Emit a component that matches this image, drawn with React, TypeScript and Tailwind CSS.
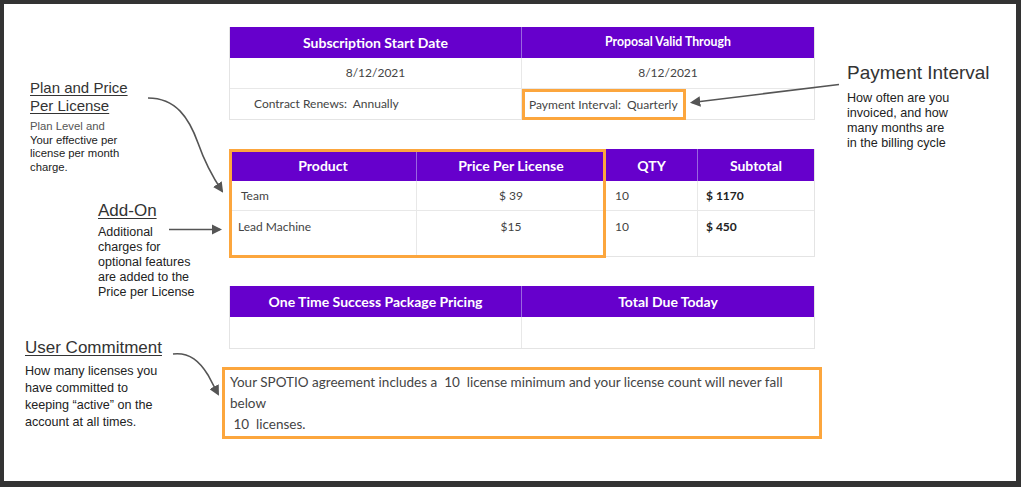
import React from 'react'

const purple = 'bg-[#6600cc]'

function ArrowLayer() {
  return (
    <svg
      className="pointer-events-none absolute left-[-4px] top-[-4px]"
      width={1021}
      height={487}
      viewBox="0 0 1021 487"
    >
      <defs>
        <marker id="head" viewBox="0 0 10 10" refX="8" refY="5" markerWidth="6.5" markerHeight="6.5" orient="auto">
          <path d="M0 0 L10 5 L0 10 Z" fill="#555" />
        </marker>
      </defs>
      <g stroke="#555" strokeWidth={1.6} fill="none">
        {/* plan and price */}
        <path d="M148 98 C 176 98, 189 118, 198 143 C 205 163, 212 176, 222 191" markerEnd="url(#head)" />
        {/* add-on */}
        <path d="M169 229.5 L 220 229.5" markerEnd="url(#head)" />
        {/* payment interval */}
        <path d="M839 84.5 L 692 102.5" markerEnd="url(#head)" />
        {/* user commitment */}
        <path d="M173 354 C 190 352, 200 362, 208 375 L 218 394" markerEnd="url(#head)" />
      </g>
    </svg>
  )
}

function Head({ children, className = '' }: { children: React.ReactNode; className?: string }) {
  return (
    <div className={`flex items-center justify-center font-bold text-white ${className}`}>{children}</div>
  )
}

export default function App() {
  return (
    <div className="relative h-[487px] w-[1021px] border-b-[6px] border-l-4 border-r-[5px] border-t-4 border-[#333] bg-white">
      <div className="flex h-full">
        {/* left annotations */}
        <div className="w-[225px] shrink-0 font-['Liberation_Sans',Arial,sans-serif] text-[#222]">
          <div className="ml-[26px] mt-[75px]">
            <div className="text-[15px] leading-[18px] text-[#333] underline underline-offset-2">
              Plan and Price
              <br />
              Per License
            </div>
            <div className="mt-[5px] text-[11.3px] leading-[13.7px]">
              <span className="text-[#555]">Plan Level and</span>
              <br />
              Your effective per
              <br />
              license per month
              <br />
              charge.
            </div>
          </div>
          <div className="ml-[94px] mt-[26px]">
            <div className="text-[17px] leading-[20px] text-[#333] underline underline-offset-2">Add-On</div>
            <div className="mt-[4px] text-[12.5px] leading-[15px]">
              Additional
              <br />
              charges for
              <br />
              optional features
              <br />
              are added to the
              <br />
              Price per License
            </div>
          </div>
          <div className="ml-[21px] mt-[38px]">
            <div className="text-[17px] leading-[20px] text-[#333] underline underline-offset-2">User Commitment</div>
            <div className="mt-[5px] text-[12.6px] leading-[17.2px]">
              How many licenses you
              <br />
              have committed to
              <br />
              keeping “active” on the
              <br />
              account at all times.
            </div>
          </div>
        </div>

        {/* center tables */}
        <div className="w-[586px] shrink-0 font-['Lato',sans-serif] text-[12px] text-[#444]">
          {/* subscription table */}
          <div className="mt-[23px] border-x border-b border-[#e4e4e4]">
            <div className={`grid h-[31px] grid-cols-2 ${purple}`}>
              <Head className="border-r border-[#9a66e0] text-[14px]">Subscription Start Date</Head>
              <Head className="text-[12.3px]">Proposal Valid Through</Head>
            </div>
            <div className="grid h-[31px] grid-cols-2 border-b border-[#e8e8e8]">
              <div className="flex items-center justify-center border-r border-[#e8e8e8]">8/12/2021</div>
              <div className="flex items-center justify-center">8/12/2021</div>
            </div>
            <div className="grid h-[30px] grid-cols-2">
              <div className="flex items-center whitespace-pre border-r border-[#e8e8e8] pl-[24px]">Contract Renews:  Annually</div>
              <div className="flex">
                <div className="-mb-px flex items-center whitespace-pre border-[3px] border-[#fca63d] pl-[4px] pr-[5px]">
                  Payment Interval:  Quarterly
                </div>
              </div>
            </div>
          </div>

          {/* products table */}
          <div className="relative mt-[29px] border-x border-b border-[#e4e4e4]">
            <div className={`grid h-[32px] grid-cols-[187px_189px_92px_1fr] ${purple}`}>
              <Head className="border-r border-[#9a66e0] text-[14px]">Product</Head>
              <Head className="border-r border-[#9a66e0] text-[14px]">Price Per License</Head>
              <Head className="border-r border-[#9a66e0] text-[14px]">QTY</Head>
              <Head className="text-[14px]">Subtotal</Head>
            </div>
            <div className="grid h-[30px] grid-cols-[187px_189px_92px_1fr] border-b border-[#e8e8e8]">
              <div className="flex items-center border-r border-[#e8e8e8] pl-[11px]">Team</div>
              <div className="flex items-center justify-center border-r border-[#e8e8e8]">$ 39</div>
              <div className="flex items-center border-r border-[#e8e8e8] pl-[9px]">10</div>
              <div className="flex items-center pl-[8px] font-bold text-[#222]">$ 1170</div>
            </div>
            <div className="grid h-[45px] grid-cols-[187px_189px_92px_1fr]">
              <div className="border-r border-[#e8e8e8] pl-[8px] pt-[7px]">Lead Machine</div>
              <div className="border-r border-[#e8e8e8] pt-[7px] text-center">$15</div>
              <div className="border-r border-[#e8e8e8] pl-[9px] pt-[7px]">10</div>
              <div className="pl-[8px] pt-[7px] font-bold text-[#222]">$ 450</div>
            </div>
            <div className="pointer-events-none absolute left-[-1px] top-0 h-[109px] w-[377px] border-[3px] border-[#fca63d]" />
          </div>

          {/* one time table */}
          <div className="mt-[29px] border-x border-b border-[#e4e4e4]">
            <div className={`grid h-[31px] grid-cols-2 ${purple}`}>
              <Head className="border-r border-[#9a66e0] text-[14px]">One Time Success Package Pricing</Head>
              <Head className="text-[14px]">Total Due Today</Head>
            </div>
            <div className="grid h-[31px] grid-cols-2">
              <div className="border-r border-[#e8e8e8]" />
              <div />
            </div>
          </div>

          {/* commitment */}
          <div className="-mx-[7px] mt-[18px] h-[72px] border-[3px] border-[#fca63d] pl-[5px] pt-[2px] text-[13.5px] leading-[21px]">
            <div className="whitespace-pre">Your SPOTIO agreement includes a  10  license minimum and your license count will never fall</div>
            <div>below</div>
            <div className="whitespace-pre"> 10  licenses.</div>
          </div>
        </div>

        {/* right annotation */}
        <div className="flex-1 pl-[32px] font-['Liberation_Sans',Arial,sans-serif] text-[#222]">
          <div className="mt-[58px] text-[19px] leading-[22px] text-[#333]">Payment Interval</div>
          <div className="mt-[7px] text-[12.6px] leading-[15px]">
            How often are you
            <br />
            invoiced, and how
            <br />
            many months are
            <br />
            in the billing cycle
          </div>
        </div>
      </div>
      <ArrowLayer />
    </div>
  )
}
